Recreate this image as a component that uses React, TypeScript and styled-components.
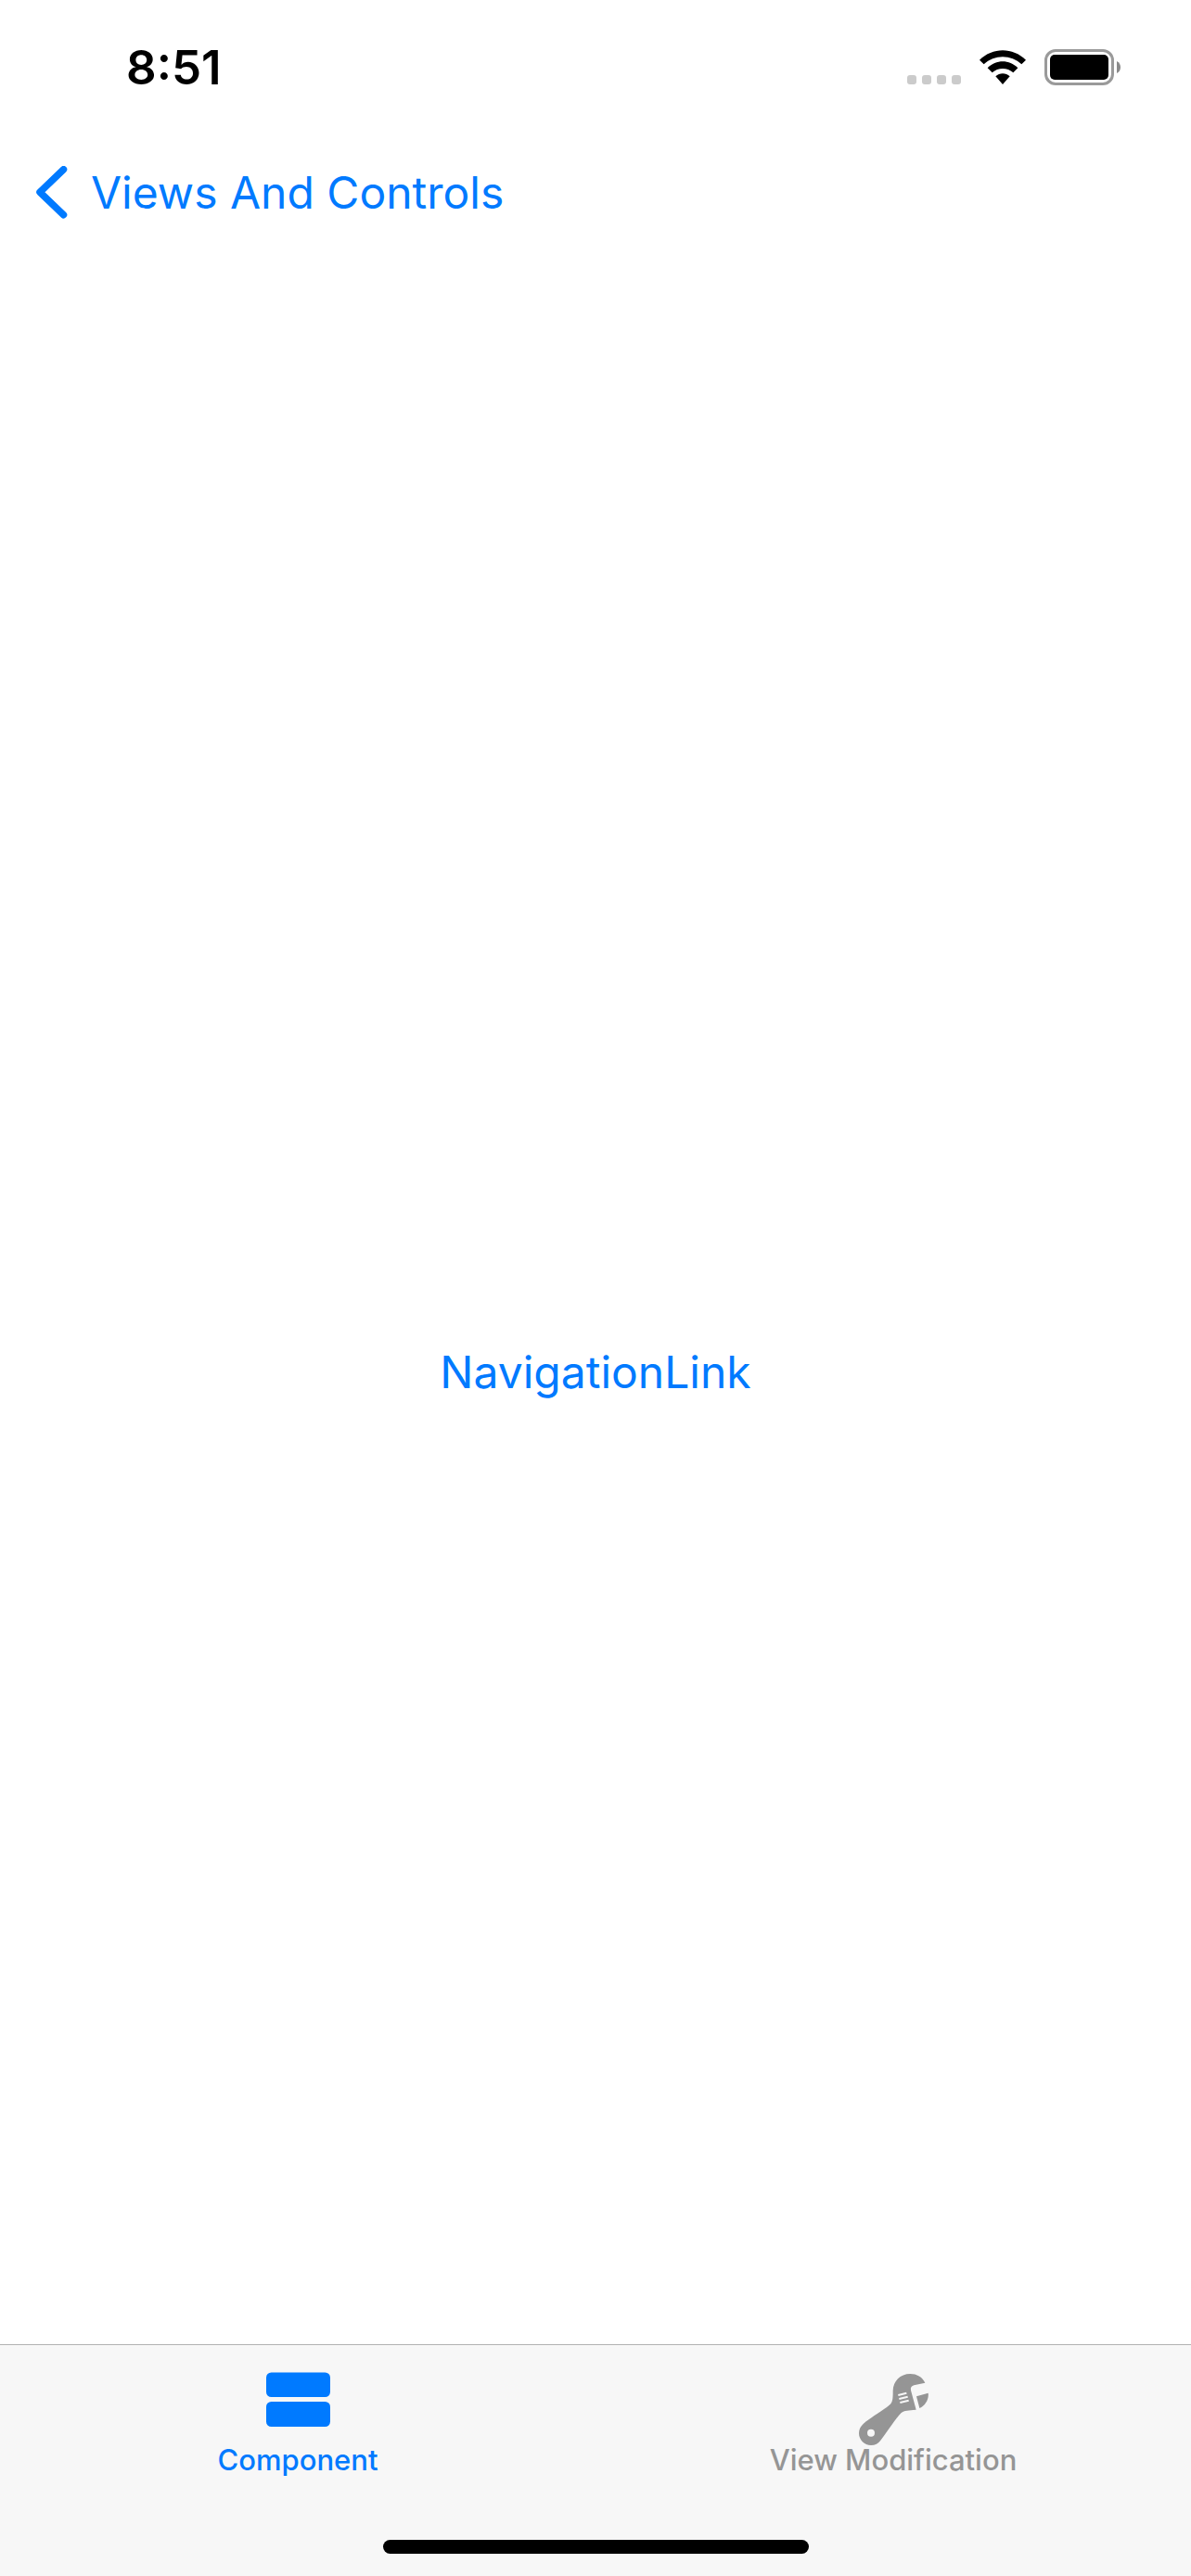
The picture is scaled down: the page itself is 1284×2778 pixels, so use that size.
import React, { useState } from 'react';
import styled, { createGlobalStyle } from 'styled-components';

const BLUE = '#007aff';
const GRAY = '#959595';
const BAR = '#f7f7f7';

const GlobalStyle = createGlobalStyle`
  *, *::before, *::after { box-sizing: border-box; }
  body {
    margin: 0;
    background: #fff;
    font-family: Inter, "Liberation Sans", sans-serif;
    -webkit-font-smoothing: antialiased;
  }
`;

const Screen = styled.div`
  min-height: 100vh;
  display: flex;
  flex-direction: column;
  background: #fff;
`;

const StatusBar = styled.div`
  display: flex;
  justify-content: space-between;
  align-items: flex-start;
  height: 141px;
  padding: 0 76px 0 136px;
`;

const Time = styled.time`
  padding-top: 43px;
  font-size: 51px;
  line-height: 60px;
  font-weight: 600;
  color: #000;
`;

const StatusIcons = styled.div`
  display: flex;
  align-items: flex-end;
  gap: 20px;
  padding-top: 53px;

  svg { display: block; }
`;

const Signal = styled.div`
  display: flex;
  gap: 6px;
  padding-bottom: 1px;
`;

const SignalDot = styled.span`
  width: 10px;
  height: 10px;
  border-radius: 3px;
  background: #cbcbcb;
`;

const WifiSlot = styled.span`
  padding-bottom: 1px;
`;

const NavBar = styled.header`
  height: 290px;
  padding: 37px 36px 0;
`;

const BackButton = styled.button`
  display: flex;
  align-items: center;
  gap: 24px;
  padding: 0;
  border: 0;
  background: none;
  color: ${BLUE};
  font: inherit;
  font-size: 48px;
  line-height: 60px;
  cursor: pointer;

  svg { display: block; }
`;

const Content = styled.main`
  flex: 1;
  display: flex;
  align-items: center;
  justify-content: center;
`;

const ContentLink = styled.a`
  color: ${BLUE};
  font-size: 48px;
  line-height: 60px;
  text-decoration: none;
`;

const BottomBar = styled.footer`
  border-top: 1px solid #b2b2b2;
  background: ${BAR};
  padding-bottom: 24px;
`;

const Tabs = styled.nav`
  display: grid;
  grid-template-columns: 1fr 1fr;
`;

const Tab = styled.button<{ $active: boolean }>`
  display: flex;
  flex-direction: column;
  align-items: center;
  height: 210px;
  padding: 29px 0 0;
  border: 0;
  background: none;
  color: ${({ $active }) => ($active ? BLUE : GRAY)};
  font: inherit;
  font-size: 31px;
  line-height: 36px;
  font-weight: 500;
  cursor: pointer;
`;

const TabIcon = styled.span`
  display: flex;
  justify-content: center;
  align-items: flex-start;
  height: 77px;
`;

const HomeIndicator = styled.div`
  width: 459px;
  height: 15px;
  margin: 0 auto;
  border-radius: 8px;
  background: #000;
`;

const WifiIcon = () => (
  <svg width="50" height="37" viewBox="289 72 150 111" aria-hidden="true">
    <path d="M289 104C331 62 397 62 439 104L425 118C391 86 337 86 303 118Z" />
    <path d="M315 130C343 102 385 102 413 130L398 145C379 128 349 128 330 145Z" />
    <path d="M341 157C354 145 374 145 387 157L364 183Z" />
  </svg>
);

const BatteryIcon = () => (
  <svg width="82" height="39" viewBox="0 0 82 39" aria-hidden="true">
    <rect x="1.5" y="1.5" width="72" height="36" rx="10.5" fill="none" stroke="#9a9a9a" strokeWidth="3" />
    <rect x="6" y="6" width="63" height="27" rx="5" />
    <path d="M78 13C81 14.5 82 17 82 19.5S81 24.5 78 26Z" fill="#8a8a8a" />
  </svg>
);

const ChevronIcon = () => (
  <svg width="38" height="58" viewBox="0 0 38 58" aria-hidden="true">
    <path d="M32.5 3.7L7 28.200L32.5 52.700" fill="none" stroke="currentColor" strokeWidth="7.5" strokeLinecap="round" strokeLinejoin="round" />
  </svg>
);

const RowsIcon = () => (
  <svg width="69" height="59" viewBox="0 0 69 59" fill="currentColor" aria-hidden="true">
    <rect y="0.5" width="69" height="26.5" rx="5.5" />
    <rect y="32" width="69" height="27" rx="5.5" />
  </svg>
);

const WrenchIcon = () => (
  <svg width="75" height="79" viewBox="375 144 225 237" fill="currentColor" aria-hidden="true">
    <path d="M589 179C580 160 562 150 541 150C508 150 486 174 485 205C485 225 485 238 478 247C468 259 410 293 389 312C380 320 375 331 375 342C375 364 393 381 414 381C427 381 438 375 445 365C465 340 495 292 512 276C522 268 535 268 560 266L543 203C541 194 546 189 553 187Z" />
    <path d="M561 223L599 212C602 232 590 252 571 261Z" />
    <circle cx="414" cy="341" r="12" fill={BAR} />
    <path d="M502 219L529 212M505 231L533 224M508 243L536 236" stroke={BAR} strokeWidth="6" />
  </svg>
);

const TABS = [
  { label: 'Component', Icon: RowsIcon },
  { label: 'View Modification', Icon: WrenchIcon },
];

export default function App() {
  const [selected, setSelected] = useState('Component');

  return (
    <Screen>
      <GlobalStyle />
      <StatusBar>
        <Time>8:51</Time>
        <StatusIcons>
          <Signal>
            <SignalDot />
            <SignalDot />
            <SignalDot />
            <SignalDot />
          </Signal>
          <WifiSlot>
            <WifiIcon />
          </WifiSlot>
          <BatteryIcon />
        </StatusIcons>
      </StatusBar>
      <NavBar>
        <BackButton type="button">
          <ChevronIcon />
          Views And Controls
        </BackButton>
      </NavBar>
      <Content>
        <ContentLink href="#navigation-link">NavigationLink</ContentLink>
      </Content>
      <BottomBar>
        <Tabs>
          {TABS.map(({ label, Icon }) => (
            <Tab
              key={label}
              type="button"
              $active={selected === label}
              aria-pressed={selected === label}
              onClick={() => setSelected(label)}
            >
              <TabIcon>
                <Icon />
              </TabIcon>
              {label}
            </Tab>
          ))}
        </Tabs>
        <HomeIndicator />
      </BottomBar>
    </Screen>
  );
}
